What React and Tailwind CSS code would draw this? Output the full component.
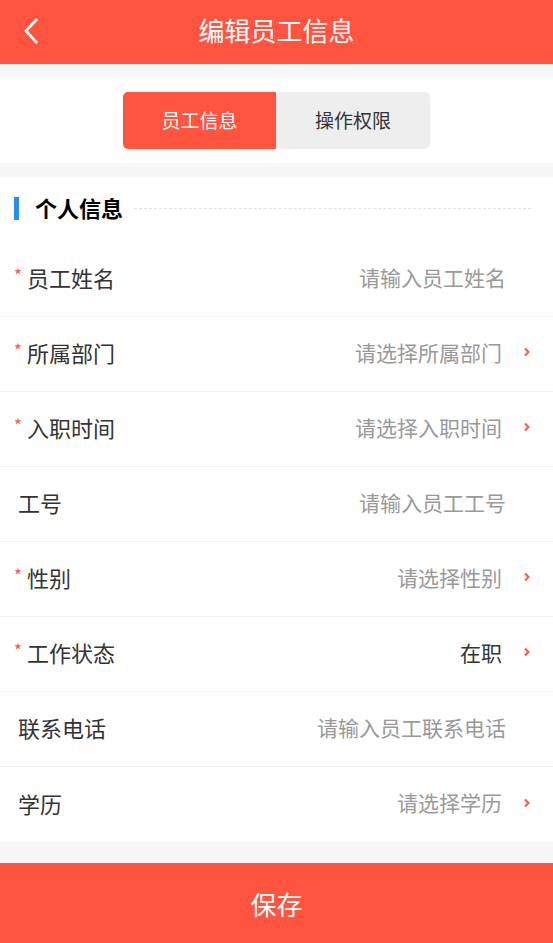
const rows = [
  { label: "员工姓名", value: "请输入员工姓名", required: true, arrow: false },
  { label: "所属部门", value: "请选择所属部门", required: true, arrow: true },
  { label: "入职时间", value: "请选择入职时间", required: true, arrow: true },
  { label: "工号", value: "请输入员工工号", required: false, arrow: false },
  { label: "性别", value: "请选择性别", required: true, arrow: true },
  { label: "工作状态", value: "在职", required: true, arrow: true, filled: true },
  { label: "联系电话", value: "请输入员工联系电话", required: false, arrow: false },
  { label: "学历", value: "请选择学历", required: false, arrow: true },
];

function Chevron() {
  return (
    <svg width="8" height="12" viewBox="0 0 8 12" className="ml-[21px]">
      <path d="M2 2.5 L5.5 6 L2 9.5" fill="none" stroke="#ff5440" strokeWidth="2" />
    </svg>
  );
}

function Row({ label, value, required, arrow, filled, last }) {
  return (
    <div
      className={`h-[75px] flex items-center pb-[4px] pr-[22px] ${required ? "pl-[14px]" : "pl-[18px]"} ${
        last ? "" : "border-b border-[#f3f3f3]"
      }`}
    >
      {required && (
        <span className="w-[13px] -mt-[6px] text-[17px] leading-none text-[#ff5440]">*</span>
      )}
      <span className="text-[22px] leading-none text-[#333]">{label}</span>
      <div className="flex-1" />
      <span className={`text-[21px] leading-none ${filled ? "text-[#333]" : "text-[#999]"}`}>{value}</span>
      {arrow ? <Chevron /> : <span className="w-[25px]" />}
    </div>
  );
}

export default function App() {
  return (
    <div
      className="w-[553px] h-[943px] bg-[#f7f7f7] flex flex-col overflow-hidden"
      style={{ fontFamily: '"Noto Sans CJK SC", "Noto Sans", sans-serif' }}
    >
      <div className="h-[64px] bg-[#ff5440] flex items-center relative shrink-0">
        <svg width="20" height="30" viewBox="0 0 20 30" className="absolute left-[22px] top-[16px]">
          <path d="M15 3 L4 15 L15 27" fill="none" stroke="#fff" strokeWidth="2.6" />
        </svg>
        <div className="flex-1 text-center text-white text-[26px] leading-none -mt-[4px]">编辑员工信息</div>
      </div>

      <div className="h-[14px] shrink-0" />

      <div className="h-[85px] bg-white flex items-center justify-center shrink-0">
        <div className="flex rounded-[5px] overflow-hidden">
          <div className="w-[153px] h-[57px] bg-[#ff5440] text-white text-[19px] flex items-center justify-center">
            员工信息
          </div>
          <div className="w-[154px] h-[57px] bg-[#eeeeee] text-[#333] text-[19px] flex items-center justify-center">
            操作权限
          </div>
        </div>
      </div>

      <div className="h-[14px] shrink-0" />

      <div className="bg-white shrink-0">
        <div className="h-[65px] flex items-center pl-[14px] pr-[22px] pb-[2px]">
          <div className="w-[5px] h-[23px] bg-[#2a8de6]" />
          <div className="ml-[16px] -mt-[4px] text-[22px] leading-none font-bold text-black">个人信息</div>
          <div className="flex-1 ml-[11px] border-t border-dashed border-[#e3e3e3]" />
        </div>
        {rows.map((r, i) => (
          <Row key={r.label} {...r} last={i === rows.length - 1} />
        ))}
      </div>

      <div className="flex-1" />

      <div className="h-[80px] bg-[#ff5440] text-white text-[26px] flex items-center justify-center shrink-0">
        保存
      </div>
    </div>
  );
}
